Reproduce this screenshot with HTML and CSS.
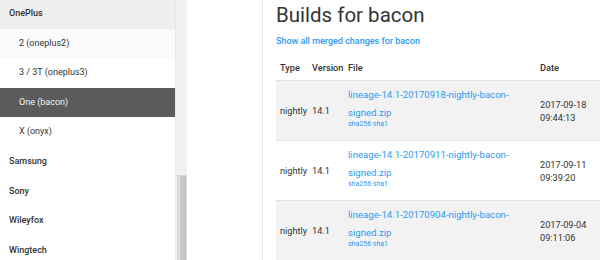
FILE: index.html
```html
<!doctype html>
<html lang="en">
  <head>
    <meta charset="utf-8">
    <title>Builds for bacon</title>
    <link rel="stylesheet" href="styles.css">
  </head>
  <body>
    <div class="page">
      <div class="sidebar">
        <ul class="devices">
          <li class="vendor">OnePlus</li>
          <li class="device alt">2 (oneplus2)</li>
          <li class="device">3 / 3T (oneplus3)</li>
          <li class="device active">One (bacon)</li>
          <li class="device">X (onyx)</li>
          <li class="vendor plain">Samsung</li>
          <li class="vendor plain">Sony</li>
          <li class="vendor plain">Wileyfox</li>
          <li class="vendor plain">Wingtech</li>
        </ul>
      </div>
      <div class="scrollbar"><div class="thumb"></div></div>

      <div class="main">
        <div class="card">
          <h1>Builds for bacon</h1>
          <a class="changes" href="#">Show all merged changes for bacon</a>
          <table class="builds">
            <colgroup>
              <col class="c-type"><col class="c-ver"><col class="c-file"><col>
            </colgroup>
            <thead>
              <tr><th>Type</th><th>Version</th><th>File</th><th>Date</th></tr>
            </thead>
            <tbody>
              <tr class="odd">
                <td>nightly</td><td>14.1</td>
                <td class="file"><a class="zip" href="#">lineage-14.1-20170918-nightly-bacon-signed.zip</a><div class="sums"><a href="#">sha256</a> <a href="#">sha1</a></div></td>
                <td>2017-09-18<br>09:44:13</td>
              </tr>
              <tr>
                <td>nightly</td><td>14.1</td>
                <td class="file"><a class="zip" href="#">lineage-14.1-20170911-nightly-bacon-signed.zip</a><div class="sums"><a href="#">sha256</a> <a href="#">sha1</a></div></td>
                <td>2017-09-11<br>09:39:20</td>
              </tr>
              <tr class="odd">
                <td>nightly</td><td>14.1</td>
                <td class="file"><a class="zip" href="#">lineage-14.1-20170904-nightly-bacon-signed.zip</a><div class="sums"><a href="#">sha256</a> <a href="#">sha1</a></div></td>
                <td>2017-09-04<br>09:11:06</td>
              </tr>
            </tbody>
          </table>
        </div>
      </div>
    </div>
  </body>
</html>
```

FILE: styles.css
```css
/* body tags */
body {
    margin: 0;
    font-family: Roboto, "Liberation Sans", sans-serif;
    color: #333;
}
a { color: #2b9af3; text-decoration: none; }

/* layout */
.page {
    display: flex;
    height: 260px;
    overflow: hidden;
}

/* sidebar */
.sidebar {
    width: 175px;
    flex: none;
    overflow: hidden;
}
.devices {
    list-style: none;
    margin: -1px 0 0 0;
    padding: 0;
}
.devices li {
    height: 29.6px;
    line-height: 29.6px;
    font-size: 9px;
    padding-left: 9px;
    white-space: nowrap;
}
.vendor {
    font-weight: 500;
    background: #eeeeee;
}
.vendor.plain { background: #fff; }
.device { padding-left: 19px !important; }
.device.alt { background: #fafafa; }
.device.active {
    background: #5b5b5b;
    color: #f2f2f2;
}

.scrollbar {
    width: 11px;
    flex: none;
    background: #f1f1f1;
    border-left: 1px solid #e9e9e9;
    position: relative;
}
.thumb {
    position: absolute;
    top: 175px;
    left: 1px;
    width: 8px;
    height: 100px;
    border: 1px solid #d6d6d6;
    background: linear-gradient(to right, #e4e4e4, #c9c9c9 40%, #c2c2c2);
}

/* main */
.main {
    flex: 1;
    padding-left: 75px;
}
.card {
    border-left: 1px solid #ececec;
    padding-left: 13px;
    height: 100%;
}
h1 {
    margin: 0;
    padding-top: 1px;
    font-size: 20.5px;
    font-weight: 400;
    line-height: 28px;
}
.changes {
    display: block;
    margin-top: 6px;
    font-size: 9px;
    font-weight: 500;
    line-height: 12px;
}
.builds {
    margin-top: 7px;
    border-collapse: collapse;
    table-layout: fixed;
    width: 360px;
    font-size: 9.2px;
}
.c-type { width: 32px; }
.c-ver { width: 36px; }
.c-file { width: 192px; }
.builds th {
    text-align: left;
    font-weight: 500;
    height: 26px;
    padding: 0 4px;
    border-bottom: 1px solid #e2e2e2;
}
.builds td {
    height: 59px;
    padding: 0 4px;
    border-bottom: 1px solid #e2e2e2;
    line-height: 13px;
}
.builds td.file {
    vertical-align: top;
    padding-top: 5px;
    height: 54px;
}
.builds tr.odd td { background: #f2f2f2; }
.zip {
    display: block;
    font-size: 9.6px;
    line-height: 18px;
}
.sums {
    font-size: 7px;
    line-height: 8px;
    margin-top: -2px;
}
```
